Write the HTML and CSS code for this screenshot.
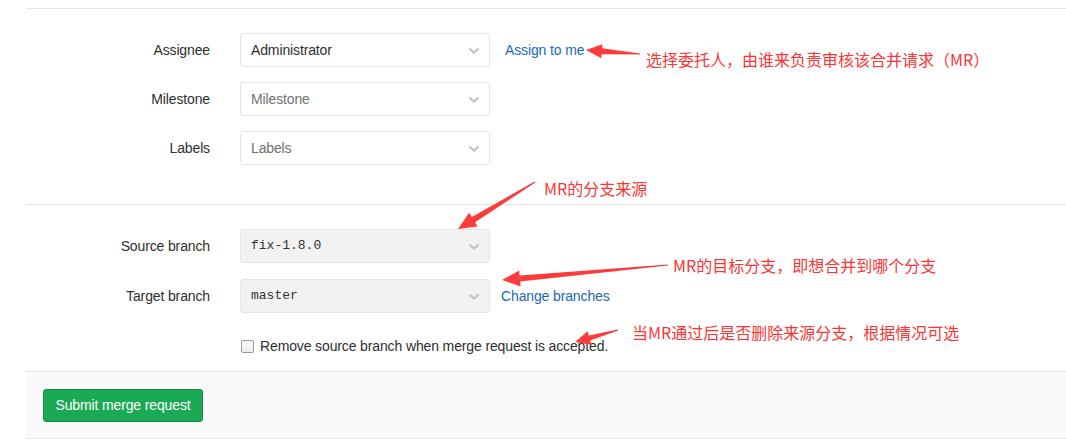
FILE: index.html
```html
<!DOCTYPE html>
<html lang="zh-CN">
<head>
<meta charset="utf-8">
<title>New merge request</title>
<link rel="stylesheet" href="styles.css">
</head>
<body>
<div class="screen">
  <div class="page">
    <div class="section section-meta">
      <div class="row">
        <label class="lbl">Assignee</label>
        <div class="select"><span class="val">Administrator</span><svg class="chev" viewBox="0 0 10 6" width="10" height="6"><path d="M1 1 L5 4.6 L9 1" /></svg></div>
        <a class="side-link assign">Assign to me</a>
      </div>
      <div class="row">
        <label class="lbl">Milestone</label>
        <div class="select"><span class="val placeholder">Milestone</span><svg class="chev" viewBox="0 0 10 6" width="10" height="6"><path d="M1 1 L5 4.6 L9 1" /></svg></div>
      </div>
      <div class="row">
        <label class="lbl">Labels</label>
        <div class="select"><span class="val placeholder">Labels</span><svg class="chev" viewBox="0 0 10 6" width="10" height="6"><path d="M1 1 L5 4.6 L9 1" /></svg></div>
      </div>
    </div>
    <div class="section section-branch">
      <div class="row">
        <label class="lbl">Source branch</label>
        <div class="select disabled"><span class="val mono">fix-1.8.0</span><svg class="chev" viewBox="0 0 10 6" width="10" height="6"><path d="M1 1 L5 4.6 L9 1" /></svg></div>
      </div>
      <div class="row row-target">
        <label class="lbl">Target branch</label>
        <div class="select disabled"><span class="val mono">master</span><svg class="chev" viewBox="0 0 10 6" width="10" height="6"><path d="M1 1 L5 4.6 L9 1" /></svg></div>
        <a class="side-link change">Change branches</a>
      </div>
      <div class="check-row">
        <span class="checkbox"></span>
        <span class="check-text">Remove source branch when merge request is accepted.</span>
      </div>
    </div>
    <div class="footer">
      <button class="btn-submit" type="button">Submit merge request</button>
    </div>
  </div>

  <svg class="arrows" width="1066" height="446" viewBox="0 0 1066 446">
    <polygon points="640,53.4 602.1,48.2 602.4,44.2 586,50 601.4,58.2 601.7,54.2 640,54.6" />
    <polygon points="534.7,181.4 471.8,217.0 469.2,212.8 458,229 477.6,226.4 475.0,222.2 535.3,182.6" />
    <polygon points="668,264.4 519.6,275.4 519.2,270.4 502,280 520.6,286.4 520.2,281.4 668,265.6" />
    <polygon points="617.9,329.4 588.8,335.6 587.6,331.3 575,342 591.4,344.8 590.2,340.4 618.1,330.6" />
  </svg>
  <span class="note note-assignee">选择委托人，由谁来负责审核该合并请求（MR）</span>
  <span class="note note-source">MR的分支来源</span>
  <span class="note note-target">MR的目标分支，即想合并到哪个分支</span>
  <span class="note note-remove">当MR通过后是否删除来源分支，根据情况可选</span>
</div>
</body>
</html>
```

FILE: styles.css
```css
* { box-sizing: border-box; }

html, body {
  margin: 0;
  padding: 0;
  background: #fff;
}

body {
  font-family: "Liberation Sans", Arial, sans-serif;
  font-size: 14px;
  letter-spacing: -0.13px;
  color: #2e2e2e;
}

.screen {
  position: relative;
  width: 1066px;
  height: 446px;
  overflow: hidden;
}

.page {
  margin-left: 26px;
  padding-top: 8px;
}

.section {
  border-top: 1px solid #e5e5e5;
  padding-top: 24px;
}

.section-meta {
  padding-bottom: 39px;
}

.row {
  display: flex;
  align-items: center;
  height: 34px;
  margin-bottom: 15px;
}

.section-meta .row:last-child {
  margin-bottom: 0;
}

.row-target {
  margin-top: 16px;
  margin-bottom: 0;
}

.section-branch .row:first-child {
  margin-bottom: 0;
}

.lbl {
  width: 184px;
  text-align: right;
  color: #2e2e2e;
  line-height: 20px;
}

.select {
  margin-left: 30px;
  width: 250px;
  height: 34px;
  border: 1px solid #e5e5e5;
  border-radius: 3px;
  background: #fff;
  display: flex;
  align-items: center;
  justify-content: space-between;
  padding: 0 10px 0 10px;
}

.select.disabled {
  background: #f2f2f2;
}

.val {
  color: #2e2e2e;
  line-height: 20px;
}

.val.placeholder {
  color: #707070;
}

.val.mono {
  font-family: "Liberation Mono", "DejaVu Sans Mono", monospace;
  font-size: 13px;
  letter-spacing: 0;
  color: #333;
}

.chev {
  margin-top: 2px;
}

.chev path {
  fill: none;
  stroke: #c4c4c4;
  stroke-width: 2.2;
  stroke-linecap: round;
  stroke-linejoin: round;
}

.side-link {
  color: #1b69b6;
  text-decoration: none;
  line-height: 20px;
}

.assign { margin-left: 15px; }
.change { margin-left: 11px; }

.check-row {
  display: flex;
  align-items: center;
  margin-left: 214px;
  margin-top: 23px;
  height: 20px;
  margin-bottom: 15px;
}

.checkbox {
  width: 13px;
  height: 13px;
  margin-left: 1px;
  margin-right: 6px;
  border: 1px solid #9a9a9a;
  border-radius: 2px;
  background: linear-gradient(#fdfdfd, #ececec);
}

.check-text {
  line-height: 20px;
  color: #2e2e2e;
}

.footer {
  background: #fafafa;
  border-top: 1px solid #e5e5e5;
  border-bottom: 1px solid #e5e5e5;
  padding: 17px 0 16px 17px;
}

.btn-submit {
  display: block;
  width: 160px;
  height: 33px;
  background: #1aaa55;
  border: 1px solid #168f48;
  border-radius: 3px;
  color: #fff;
  font-family: "Liberation Sans", Arial, sans-serif;
  font-size: 14px;
  letter-spacing: -0.13px;
  padding: 0;
  line-height: 31px;
}

.arrows {
  position: absolute;
  left: 0;
  top: 0;
  pointer-events: none;
}

.arrows polygon {
  fill: #fc3c3c;
}

.note {
  position: absolute;
  font-family: "Noto Sans CJK SC", "Noto Sans", sans-serif;
  font-size: 16px;
  line-height: 16px;
  letter-spacing: 0;
  color: #fb3434;
  white-space: nowrap;
}

.note-assignee { left: 646px; top: 51px; }
.note-source { left: 544px; top: 180px; }
.note-target { left: 673px; top: 257px; }
.note-remove { left: 632px; top: 324px; }
```
